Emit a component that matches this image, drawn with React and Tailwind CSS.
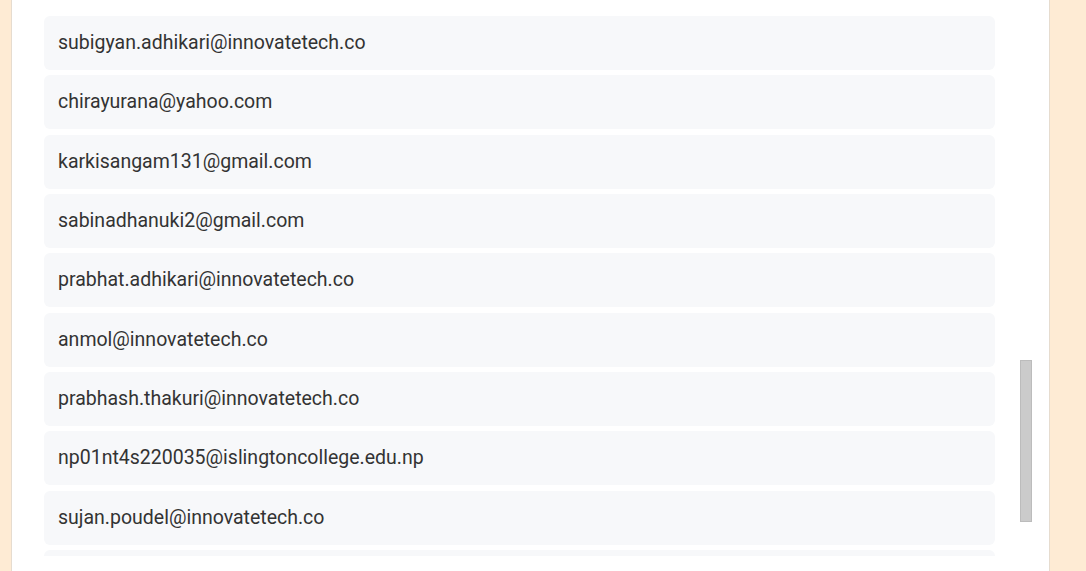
import React from "react";

const emails = [
  "subigyan.adhikari@innovatetech.co",
  "chirayurana@yahoo.com",
  "karkisangam131@gmail.com",
  "sabinadhanuki2@gmail.com",
  "prabhat.adhikari@innovatetech.co",
  "anmol@innovatetech.co",
  "prabhash.thakuri@innovatetech.co",
  "np01nt4s220035@islingtoncollege.edu.np",
  "sujan.poudel@innovatetech.co",
  "",
];

export default function App() {
  return (
    <div
      className="flex h-[571px] w-[1086px] overflow-hidden bg-[#feebd4]"
      style={{ fontFamily: "Roboto, 'Liberation Sans', sans-serif" }}
    >
      <div className="w-[11px] shrink-0" />
      <div className="flex h-full w-[1039px] shrink-0 border-x border-[#e6dccf] bg-white">
        <div className="flex h-[556px] w-[1007px] shrink-0 flex-col gap-[5.33px] overflow-hidden pl-[32px] pt-4">
          {emails.map((e, i) => (
            <div
              key={i}
              className="flex h-[54px] w-[951px] shrink-0 items-center rounded-[6px] bg-[#f7f8fa] px-[14px] pb-[1px] text-[19.5px] text-[#333333]"
            >
              {e}
            </div>
          ))}
        </div>
        <div className="flex flex-1 pt-[360px]">
          <div className="ml-[1px] h-[162px] w-[12px] border border-[#bcbcbc] bg-[#cbcbcb]" />
        </div>
      </div>
    </div>
  );
}
